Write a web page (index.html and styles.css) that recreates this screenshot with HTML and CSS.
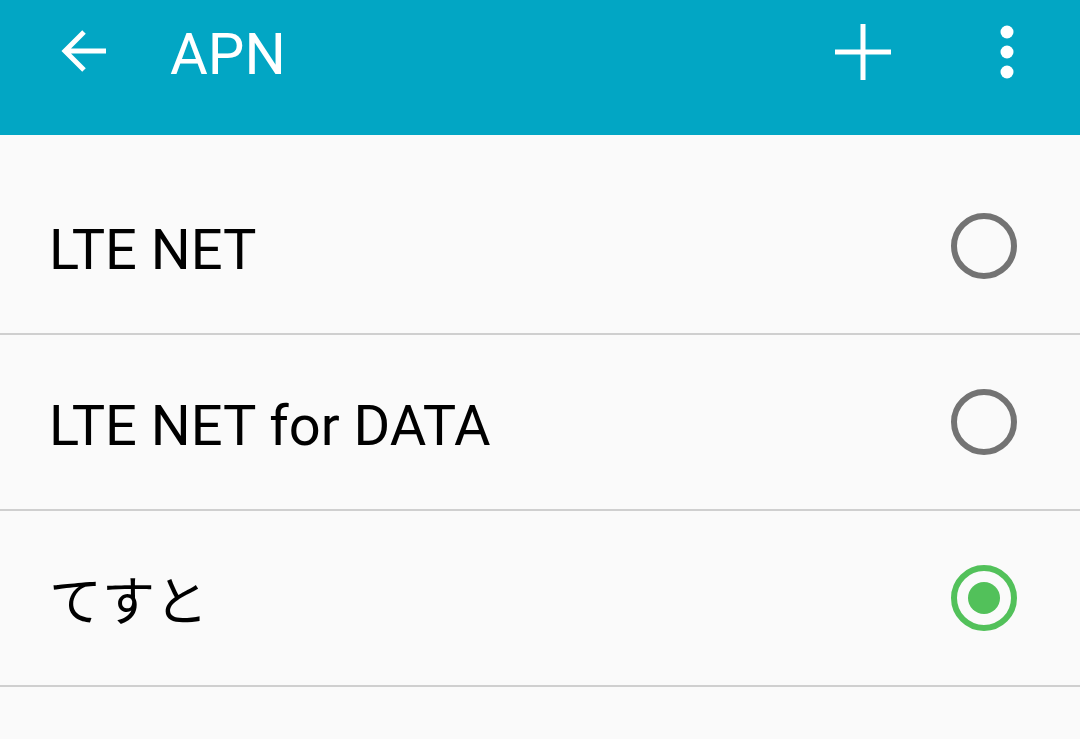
FILE: index.html
```html
<!DOCTYPE html>
<html lang="ja">
<head>
<meta charset="utf-8">
<title>APN</title>
<link rel="stylesheet" href="styles.css">
</head>
<body>
<header class="appbar">
  <button class="icon-btn back" aria-label="back">
    <svg width="48" height="48" viewBox="0 0 48 48"><path d="M46 24H5M24 5L5 24L24 43" fill="none" stroke="#fff" stroke-width="5" stroke-linecap="butt" stroke-linejoin="miter"/></svg>
  </button>
  <h1 class="title">APN</h1>
  <div class="actions">
    <button class="icon-btn add" aria-label="add">
      <svg width="56" height="56" viewBox="0 0 56 56"><path d="M28 0V56M0 28H56" fill="none" stroke="#fff" stroke-width="5"/></svg>
    </button>
    <button class="icon-btn more" aria-label="more">
      <svg width="14" height="54" viewBox="0 0 14 54"><circle cx="7" cy="7" r="6.5" fill="#fff"/><circle cx="7" cy="27" r="6.5" fill="#fff"/><circle cx="7" cy="47" r="6.5" fill="#fff"/></svg>
    </button>
  </div>
</header>
<ul class="list">
  <li class="row"><span class="label">LTE NET</span><span class="radio"></span></li>
  <li class="row"><span class="label">LTE NET for DATA</span><span class="radio"></span></li>
  <li class="row"><span class="label ja">てすと</span><span class="radio checked"></span></li>
</ul>
</body>
</html>
```
FILE: styles.css
```css
* { box-sizing: border-box; }
html, body { margin: 0; padding: 0; }
body {
  width: 1080px;
  height: 739px;
  overflow: hidden;
  background: #fafafa;
  font-family: Roboto, "Noto Sans CJK JP", sans-serif;
}
.appbar {
  height: 135px;
  background: #02a6c4;
  display: flex;
  align-items: center;
}
.icon-btn {
  border: 0;
  background: none;
  padding: 0;
  display: flex;
  align-items: center;
  justify-content: center;
}
.back {
  margin-left: 60px;
  margin-top: -34px;
}
.title {
  margin: -28px 0 0 62px;
  color: #fff;
  font-weight: 400;
  font-size: 58px;
}
.actions {
  margin-left: auto;
  display: flex;
  align-items: center;
  margin-top: -31px;
}
.add { margin-right: 109px; }
.more { margin-right: 66px; }
.list {
  list-style: none;
  margin: 0;
  padding: 24px 0 0;
}
.row {
  height: 177px;
  border-bottom: 2px solid #cfcfcf;
  display: flex;
  align-items: center;
  padding: 0 63px 0 49px;
  margin-top: -1px;
}
.label {
  font-size: 56px;
  color: #000;
  padding-top: 8px;
}
.label.ja {
  font-size: 53px;
  padding-top: 0;
}
.radio {
  margin-left: auto;
  width: 66px;
  height: 66px;
  border-radius: 50%;
  border: 6px solid #737373;
  display: flex;
  align-items: center;
  justify-content: center;
}
.radio.checked { border-color: #52c15a; }
.radio.checked::after {
  content: "";
  width: 32px;
  height: 32px;
  border-radius: 50%;
  background: #52c15a;
}
```
